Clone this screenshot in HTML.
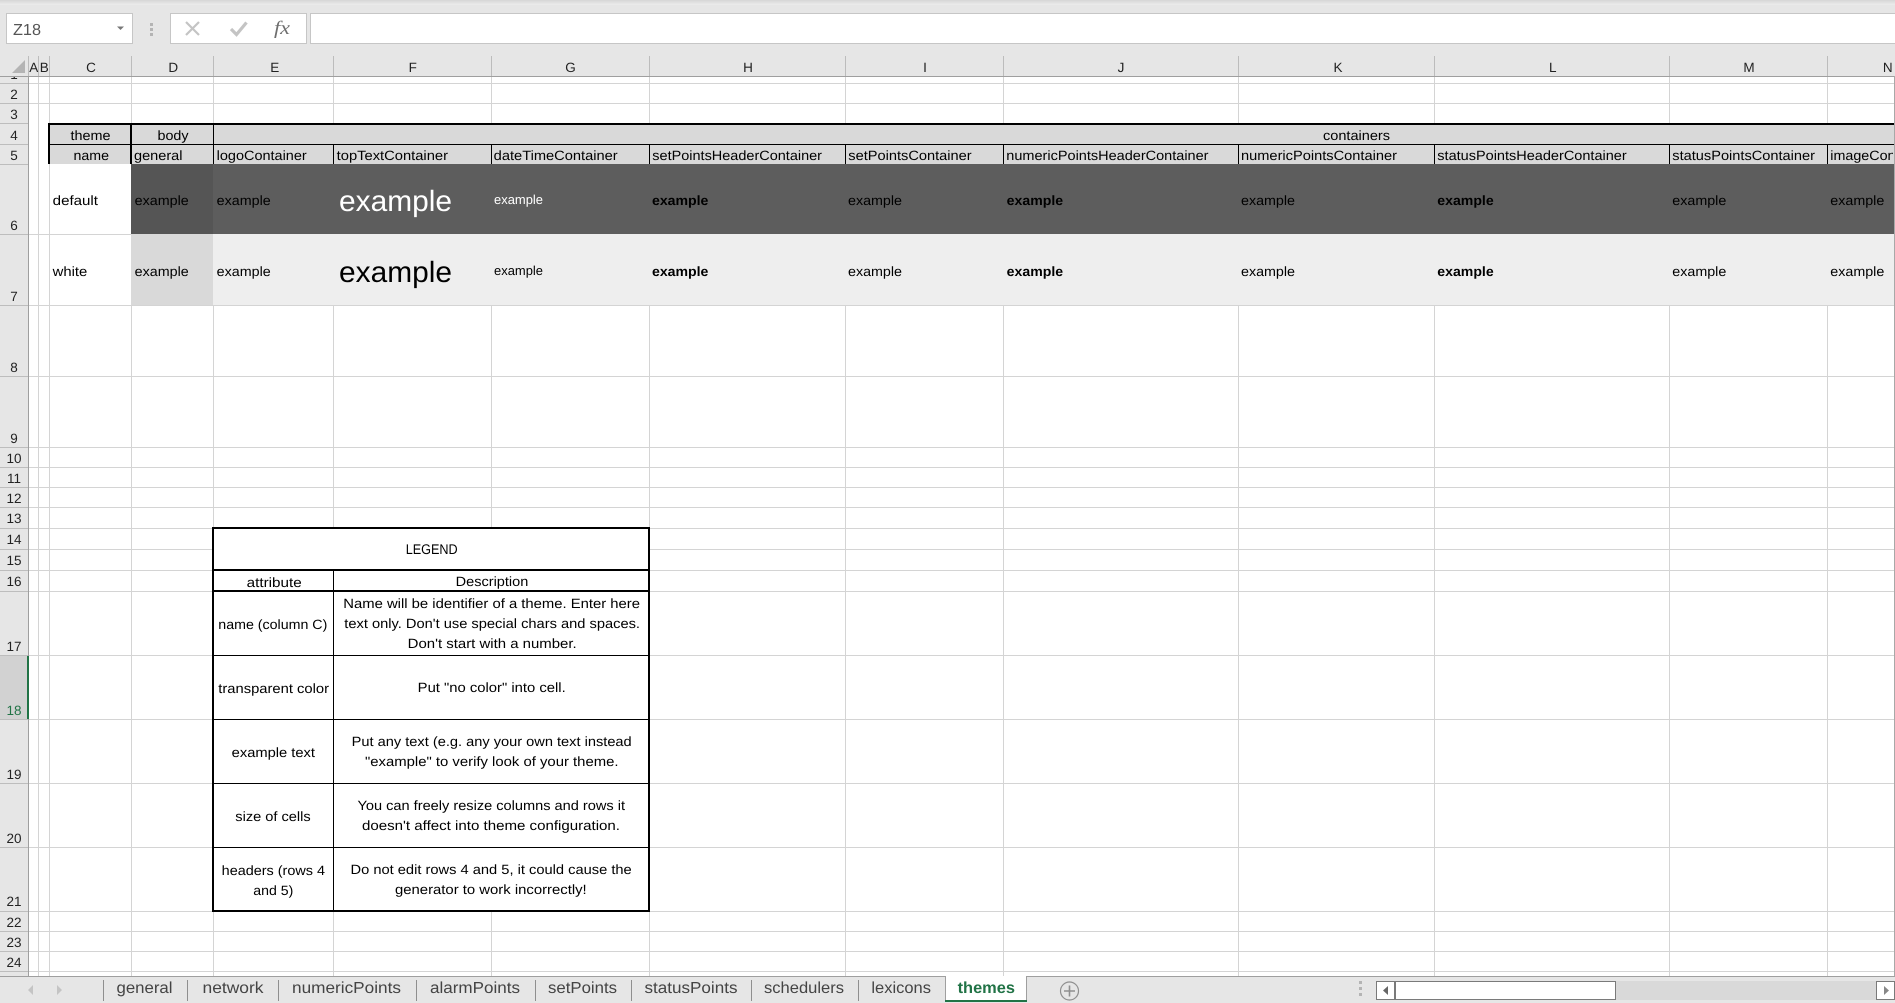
<!DOCTYPE html>
<html><head><meta charset="utf-8"><title>themes</title>
<style>
html,body{margin:0;padding:0;background:#fff;overflow:hidden;width:1895px;height:1003px}
svg{display:block;position:absolute;left:0;top:0}
rect{shape-rendering:crispEdges}
text{font-family:"Liberation Sans",sans-serif;font-size:13.5px;fill:#000;text-rendering:geometricPrecision}
.r text{text-anchor:middle;fill:#222}
.b{font-weight:bold}
.t{font-size:16px;fill:#444}
</style></head><body>
<svg width="1895" height="1003" viewBox="0 0 1895 1003" xmlns="http://www.w3.org/2000/svg">
<defs>
<linearGradient id="top" x1="0" y1="0" x2="0" y2="1"><stop offset="0" stop-color="#d6d6d6"/><stop offset="1" stop-color="#ececec"/></linearGradient>
<clipPath id="cn"><rect x="1828" y="144" width="65" height="20"/></clipPath>
</defs>
<rect x="0" y="0" width="1895" height="1003" fill="#fff"/>

<!-- vertical grid -->
<g fill="#d4d4d4">
<rect x="38" y="76" width="1" height="900"/><rect x="49" y="76" width="1" height="900"/><rect x="131" y="76" width="1" height="900"/><rect x="213" y="76" width="1" height="900"/><rect x="333" y="76" width="1" height="900"/><rect x="491" y="76" width="1" height="900"/><rect x="649" y="76" width="1" height="900"/><rect x="845" y="76" width="1" height="900"/><rect x="1003" y="76" width="1" height="900"/><rect x="1238" y="76" width="1" height="900"/><rect x="1434" y="76" width="1" height="900"/><rect x="1669" y="76" width="1" height="900"/><rect x="1827" y="76" width="1" height="900"/>
<!-- horizontal grid -->
<rect x="29" y="83" width="1866" height="1"/><rect x="29" y="103" width="1866" height="1"/><rect x="29" y="234" width="1866" height="1"/><rect x="29" y="305" width="1866" height="1"/><rect x="29" y="376" width="1866" height="1"/><rect x="29" y="447" width="1866" height="1"/><rect x="29" y="467" width="1866" height="1"/><rect x="29" y="487" width="1866" height="1"/><rect x="29" y="507" width="1866" height="1"/><rect x="29" y="528" width="1866" height="1"/><rect x="29" y="549" width="1866" height="1"/><rect x="29" y="570" width="1866" height="1"/><rect x="29" y="591" width="1866" height="1"/><rect x="29" y="655" width="1866" height="1"/><rect x="29" y="719" width="1866" height="1"/><rect x="29" y="783" width="1866" height="1"/><rect x="29" y="847" width="1866" height="1"/><rect x="29" y="911" width="1866" height="1"/><rect x="29" y="931" width="1866" height="1"/><rect x="29" y="951" width="1866" height="1"/><rect x="29" y="971" width="1866" height="1"/>
</g>

<!-- header rows 4-5 and fills -->
<rect x="49" y="125" width="1845" height="39" fill="#d9d9d9"/>
<rect x="131" y="164" width="82" height="70" fill="#555"/>
<rect x="213" y="164" width="1681" height="70" fill="#5d5d5d"/>
<rect x="131" y="234" width="82" height="71" fill="#d9d9d9"/>
<rect x="213" y="234" width="1681" height="71" fill="#eee"/>
<rect x="50" y="164" width="81" height="70" fill="#fff"/>
<rect x="50" y="235" width="81" height="70" fill="#fff"/>

<!-- black header borders -->
<g fill="#000">
<rect x="48" y="123" width="1846" height="2"/>
<rect x="49" y="144" width="1845" height="1"/>
<rect x="48" y="123" width="2" height="41"/>
<rect x="130" y="123" width="2" height="41"/>
<rect x="213" y="123" width="1" height="41"/>
<rect x="333" y="144" width="1" height="20"/><rect x="491" y="144" width="1" height="20"/><rect x="649" y="144" width="1" height="20"/><rect x="845" y="144" width="1" height="20"/><rect x="1003" y="144" width="1" height="20"/><rect x="1238" y="144" width="1" height="20"/><rect x="1434" y="144" width="1" height="20"/><rect x="1669" y="144" width="1" height="20"/><rect x="1827" y="144" width="1" height="20"/>
</g>

<!-- header text -->
<text x="70.500" y="140" textLength="40" lengthAdjust="spacingAndGlyphs">theme</text>
<text x="157.500" y="140" textLength="31" lengthAdjust="spacingAndGlyphs">body</text>
<text x="1323" y="140" textLength="67" lengthAdjust="spacingAndGlyphs">containers</text>
<text x="73.500" y="160" textLength="35.500" lengthAdjust="spacingAndGlyphs">name</text>
<text x="134" y="160" textLength="48.500" lengthAdjust="spacingAndGlyphs">general</text>
<text x="216.700" y="160" textLength="90" lengthAdjust="spacingAndGlyphs">logoContainer</text>
<text x="336.700" y="160" textLength="111.300" lengthAdjust="spacingAndGlyphs">topTextContainer</text>
<text x="493.700" y="160" textLength="124" lengthAdjust="spacingAndGlyphs">dateTimeContainer</text>
<text x="652.300" y="160" textLength="169.700" lengthAdjust="spacingAndGlyphs">setPointsHeaderContainer</text>
<text x="848.300" y="160" textLength="123.300" lengthAdjust="spacingAndGlyphs">setPointsContainer</text>
<text x="1006.300" y="160" textLength="202.200" lengthAdjust="spacingAndGlyphs">numericPointsHeaderContainer</text>
<text x="1241" y="160" textLength="156" lengthAdjust="spacingAndGlyphs">numericPointsContainer</text>
<text x="1437.300" y="160" textLength="189.400" lengthAdjust="spacingAndGlyphs">statusPointsHeaderContainer</text>
<text x="1672.300" y="160" textLength="142.700" lengthAdjust="spacingAndGlyphs">statusPointsContainer</text>
<g clip-path="url(#cn)"><text x="1830.300" y="160" textLength="101" lengthAdjust="spacingAndGlyphs">imageContainer</text></g>

<!-- row 6 -->
<text x="52.700" y="205" textLength="45.300" lengthAdjust="spacingAndGlyphs">default</text>
<text x="134.700" y="205" textLength="54" lengthAdjust="spacingAndGlyphs">example</text>
<text x="216.700" y="205" textLength="54" lengthAdjust="spacingAndGlyphs">example</text>
<text x="339" y="211" textLength="113" lengthAdjust="spacingAndGlyphs" style="font-size:29.330px;fill:#fff">example</text>
<text x="494" y="204" textLength="49" lengthAdjust="spacingAndGlyphs" style="font-size:13px;fill:#fff">example</text>
<text x="652" y="205" textLength="56.400" lengthAdjust="spacingAndGlyphs" class="b">example</text>
<text x="848" y="205" textLength="54" lengthAdjust="spacingAndGlyphs">example</text>
<text x="1006.700" y="205" textLength="56.400" lengthAdjust="spacingAndGlyphs" class="b">example</text>
<text x="1241" y="205" textLength="54" lengthAdjust="spacingAndGlyphs">example</text>
<text x="1437.300" y="205" textLength="56.400" lengthAdjust="spacingAndGlyphs" class="b">example</text>
<text x="1672.300" y="205" textLength="54" lengthAdjust="spacingAndGlyphs">example</text>
<text x="1830.300" y="205" textLength="54" lengthAdjust="spacingAndGlyphs">example</text>

<!-- row 7 -->
<text x="52.700" y="276" textLength="34.600" lengthAdjust="spacingAndGlyphs">white</text>
<text x="134.700" y="276" textLength="54" lengthAdjust="spacingAndGlyphs">example</text>
<text x="216.700" y="276" textLength="54" lengthAdjust="spacingAndGlyphs">example</text>
<text x="339" y="282" textLength="113" lengthAdjust="spacingAndGlyphs" style="font-size:29.330px">example</text>
<text x="494" y="275" textLength="49" lengthAdjust="spacingAndGlyphs" style="font-size:13px">example</text>
<text x="652" y="276" textLength="56.400" lengthAdjust="spacingAndGlyphs" class="b">example</text>
<text x="848" y="276" textLength="54" lengthAdjust="spacingAndGlyphs">example</text>
<text x="1006.700" y="276" textLength="56.400" lengthAdjust="spacingAndGlyphs" class="b">example</text>
<text x="1241" y="276" textLength="54" lengthAdjust="spacingAndGlyphs">example</text>
<text x="1437.300" y="276" textLength="56.400" lengthAdjust="spacingAndGlyphs" class="b">example</text>
<text x="1672.300" y="276" textLength="54" lengthAdjust="spacingAndGlyphs">example</text>
<text x="1830.300" y="276" textLength="54" lengthAdjust="spacingAndGlyphs">example</text>

<!-- legend -->
<rect x="213" y="528" width="436" height="383" fill="#fff"/>
<g fill="#000">
<rect x="212" y="527" width="438" height="2"/>
<rect x="212" y="569" width="438" height="2"/>
<rect x="212" y="590" width="438" height="2"/>
<rect x="212" y="655" width="438" height="1"/>
<rect x="212" y="719" width="438" height="1"/>
<rect x="212" y="783" width="438" height="1"/>
<rect x="212" y="847" width="438" height="1"/>
<rect x="212" y="910" width="438" height="2"/>
<rect x="212" y="527" width="2" height="385"/>
<rect x="648" y="527" width="2" height="385"/>
<rect x="333" y="570" width="1" height="341"/>
</g>
<text x="405.700" y="554" textLength="52" lengthAdjust="spacingAndGlyphs" style="font-size:14px">LEGEND</text>
<text x="246.700" y="587" textLength="55" lengthAdjust="spacingAndGlyphs">attribute</text>
<text x="455.700" y="586" textLength="72.600" lengthAdjust="spacingAndGlyphs">Description</text>
<text x="218.300" y="629" textLength="109" lengthAdjust="spacingAndGlyphs">name (column C)</text>
<text x="343.300" y="608" textLength="296.700" lengthAdjust="spacingAndGlyphs">Name will be identifier of a theme. Enter here</text>
<text x="344.300" y="628" textLength="295.700" lengthAdjust="spacingAndGlyphs">text only. Don't use special chars and spaces.</text>
<text x="407.700" y="648" textLength="169" lengthAdjust="spacingAndGlyphs">Don't start with a number.</text>
<text x="218.300" y="693" textLength="110.700" lengthAdjust="spacingAndGlyphs">transparent color</text>
<text x="417.700" y="692" textLength="148" lengthAdjust="spacingAndGlyphs">Put "no color" into cell.</text>
<text x="231.700" y="757" textLength="83.300" lengthAdjust="spacingAndGlyphs">example text</text>
<text x="351.700" y="746" textLength="280" lengthAdjust="spacingAndGlyphs">Put any text (e.g. any your own text instead</text>
<text x="365" y="766" textLength="253.500" lengthAdjust="spacingAndGlyphs">"example" to verify look of your theme.</text>
<text x="235.300" y="821" textLength="75.400" lengthAdjust="spacingAndGlyphs">size of cells</text>
<text x="357.500" y="810" textLength="267.500" lengthAdjust="spacingAndGlyphs">You can freely resize columns and rows it</text>
<text x="362" y="830" textLength="258" lengthAdjust="spacingAndGlyphs">doesn't affect into theme configuration.</text>
<text x="221.700" y="875" textLength="103.300" lengthAdjust="spacingAndGlyphs">headers (rows 4</text>
<text x="253.300" y="895" textLength="40" lengthAdjust="spacingAndGlyphs">and 5)</text>
<text x="350.500" y="874" textLength="281.200" lengthAdjust="spacingAndGlyphs">Do not edit rows 4 and 5, it could cause the</text>
<text x="395" y="894" textLength="191.700" lengthAdjust="spacingAndGlyphs">generator to work incorrectly!</text>

<!-- row headers -->
<rect x="0" y="76" width="28" height="900" fill="#e6e6e6"/>
<rect x="0" y="656" width="27" height="63" fill="#d2d2d2"/>
<g fill="#bdbdbd">
<rect x="0" y="83" width="28" height="1"/><rect x="0" y="103" width="28" height="1"/><rect x="0" y="123" width="28" height="1"/><rect x="0" y="144" width="28" height="1"/><rect x="0" y="164" width="28" height="1"/><rect x="0" y="234" width="28" height="1"/><rect x="0" y="305" width="28" height="1"/><rect x="0" y="376" width="28" height="1"/><rect x="0" y="447" width="28" height="1"/><rect x="0" y="467" width="28" height="1"/><rect x="0" y="487" width="28" height="1"/><rect x="0" y="507" width="28" height="1"/><rect x="0" y="528" width="28" height="1"/><rect x="0" y="549" width="28" height="1"/><rect x="0" y="570" width="28" height="1"/><rect x="0" y="591" width="28" height="1"/><rect x="0" y="655" width="28" height="1"/><rect x="0" y="719" width="28" height="1"/><rect x="0" y="783" width="28" height="1"/><rect x="0" y="847" width="28" height="1"/><rect x="0" y="911" width="28" height="1"/><rect x="0" y="931" width="28" height="1"/><rect x="0" y="951" width="28" height="1"/><rect x="0" y="971" width="28" height="1"/>
</g>
<rect x="28" y="76" width="1" height="900" fill="#9f9f9f"/>
<rect x="27" y="656" width="2" height="63" fill="#217346"/>
<g class="r">
<text x="14" y="79">1</text><text x="14" y="99">2</text><text x="14" y="119">3</text><text x="14" y="140">4</text><text x="14" y="160">5</text><text x="14" y="230">6</text><text x="14" y="301">7</text><text x="14" y="372">8</text><text x="14" y="443">9</text><text x="14" y="463">10</text><text x="14" y="483">11</text><text x="14" y="503">12</text><text x="14" y="523">13</text><text x="14" y="544">14</text><text x="14" y="565">15</text><text x="14" y="586">16</text><text x="14" y="651">17</text><text x="14" y="715" style="fill:#217346">18</text><text x="14" y="779">19</text><text x="14" y="843">20</text><text x="14" y="906">21</text><text x="14" y="927">22</text><text x="14" y="947">23</text><text x="14" y="967">24</text>
</g>

<!-- top area (drawn over row 1) -->
<rect x="0" y="0" width="1895" height="76" fill="#e6e6e6"/>
<rect x="0" y="0" width="1895" height="5" fill="url(#top)"/>
<rect x="6.500" y="13.500" width="126" height="30" fill="#fff" stroke="#c6c6c6" style="shape-rendering:crispEdges"/>
<text x="13" y="35" textLength="28" lengthAdjust="spacingAndGlyphs" style="font-size:16px;fill:#555">Z18</text>
<path d="M117 26.500h7l-3.500 3.500z" fill="#777"/>
<g fill="#b4b4b4"><rect x="150" y="23" width="3" height="3"/><rect x="150" y="28" width="3" height="3"/><rect x="150" y="33" width="3" height="3"/></g>
<rect x="170.500" y="13.500" width="136" height="30" fill="#fff" stroke="#c6c6c6" style="shape-rendering:crispEdges"/>
<rect x="310.500" y="13.500" width="1590" height="30" fill="#fff" stroke="#c6c6c6" style="shape-rendering:crispEdges"/>
<path d="M186 22l13 13M199 22l-13 13" stroke="#c4c4c4" stroke-width="2.200" fill="none"/>
<path d="M231 29l5.500 5.500 10-12" stroke="#c4c4c4" stroke-width="3.200" fill="none"/>
<text x="274" y="34" textLength="16" lengthAdjust="spacingAndGlyphs" style="font-family:'Liberation Serif',serif;font-style:italic;font-size:19px;fill:#6e6e6e">fx</text>

<!-- column headers -->
<path d="M25 60v13h-13z" fill="#b4b4b4"/>
<g fill="#bcbcbc">
<rect x="28" y="56" width="1" height="20"/><rect x="38" y="56" width="1" height="20"/><rect x="49" y="56" width="1" height="20"/><rect x="131" y="56" width="1" height="20"/><rect x="213" y="56" width="1" height="20"/><rect x="333" y="56" width="1" height="20"/><rect x="491" y="56" width="1" height="20"/><rect x="649" y="56" width="1" height="20"/><rect x="845" y="56" width="1" height="20"/><rect x="1003" y="56" width="1" height="20"/><rect x="1238" y="56" width="1" height="20"/><rect x="1434" y="56" width="1" height="20"/><rect x="1669" y="56" width="1" height="20"/><rect x="1827" y="56" width="1" height="20"/>
</g>
<rect x="0" y="76" width="1895" height="1" fill="#9f9f9f"/>
<g class="r">
<text x="33.700" y="72">A</text><text x="44.300" y="72">B</text><text x="91" y="72">C</text><text x="173.300" y="72">D</text><text x="274.700" y="72">E</text><text x="412.700" y="72">F</text><text x="570.500" y="72">G</text><text x="748" y="72">H</text><text x="925" y="72">I</text><text x="1121" y="72">J</text><text x="1338" y="72">K</text><text x="1552.700" y="72">L</text><text x="1749" y="72">M</text><text x="1887.700" y="72">N</text>
</g>
<rect x="1894" y="76" width="1" height="900" fill="#a8a8a8"/>

<!-- tab bar -->
<rect x="0" y="976" width="1895" height="27" fill="#e6e6e6"/>
<rect x="0" y="976" width="1895" height="1" fill="#9f9f9f"/>
<path d="M33 985v10l-5-5zM57 985v10l5-5z" fill="#c4c4c4"/>
<g fill="#8f8f8f">
<rect x="103" y="980" width="1" height="21"/><rect x="187" y="980" width="1" height="21"/><rect x="278" y="980" width="1" height="21"/><rect x="416" y="980" width="1" height="21"/><rect x="535" y="980" width="1" height="21"/><rect x="631" y="980" width="1" height="21"/><rect x="751" y="980" width="1" height="21"/><rect x="858" y="980" width="1" height="21"/>
</g>
<text class="t" x="116.500" y="993" textLength="56" lengthAdjust="spacingAndGlyphs">general</text>
<text class="t" x="202.500" y="993" textLength="61" lengthAdjust="spacingAndGlyphs">network</text>
<text class="t" x="292" y="993" textLength="109" lengthAdjust="spacingAndGlyphs">numericPoints</text>
<text class="t" x="430" y="993" textLength="90" lengthAdjust="spacingAndGlyphs">alarmPoints</text>
<text class="t" x="548" y="993" textLength="69" lengthAdjust="spacingAndGlyphs">setPoints</text>
<text class="t" x="644.500" y="993" textLength="93" lengthAdjust="spacingAndGlyphs">statusPoints</text>
<text class="t" x="764" y="993" textLength="80" lengthAdjust="spacingAndGlyphs">schedulers</text>
<text class="t" x="871.400" y="993" textLength="59.600" lengthAdjust="spacingAndGlyphs">lexicons</text>
<rect x="945" y="976" width="81" height="24" fill="#fff"/>
<rect x="945" y="976" width="1" height="24" fill="#9f9f9f"/>
<rect x="1026" y="976" width="1" height="24" fill="#9f9f9f"/>
<rect x="945" y="1000" width="82" height="2" fill="#217346"/>
<text x="957.600" y="993" textLength="57.400" lengthAdjust="spacingAndGlyphs" style="font-size:16px;font-weight:bold;fill:#217346">themes</text>
<circle cx="1069.500" cy="991" r="9" fill="none" stroke="#8f8f8f" stroke-width="1.200"/>
<path d="M1064 991h11M1069.500 985.500v11" stroke="#8f8f8f" stroke-width="1.600" fill="none"/>
<g fill="#b4b4b4"><rect x="1359" y="981" width="3" height="3"/><rect x="1359" y="987" width="3" height="3"/><rect x="1359" y="993" width="3" height="3"/></g>

<rect x="1376" y="981" width="518" height="19" fill="#d9d9d9"/>
<rect x="1376.500" y="981.500" width="18" height="18" fill="#fff" stroke="#7a7a7a" style="shape-rendering:crispEdges"/>
<path d="M1388 986v9l-5-4.500z" fill="#666"/>
<rect x="1395.500" y="981.500" width="220" height="18" fill="#fff" stroke="#7a7a7a" style="shape-rendering:crispEdges"/>
<rect x="1876.500" y="981.500" width="18" height="18" fill="#fff" stroke="#7a7a7a" style="shape-rendering:crispEdges"/>
<path d="M1884 986v9l5-4.500z" fill="#888"/>
</svg>
</body></html>
